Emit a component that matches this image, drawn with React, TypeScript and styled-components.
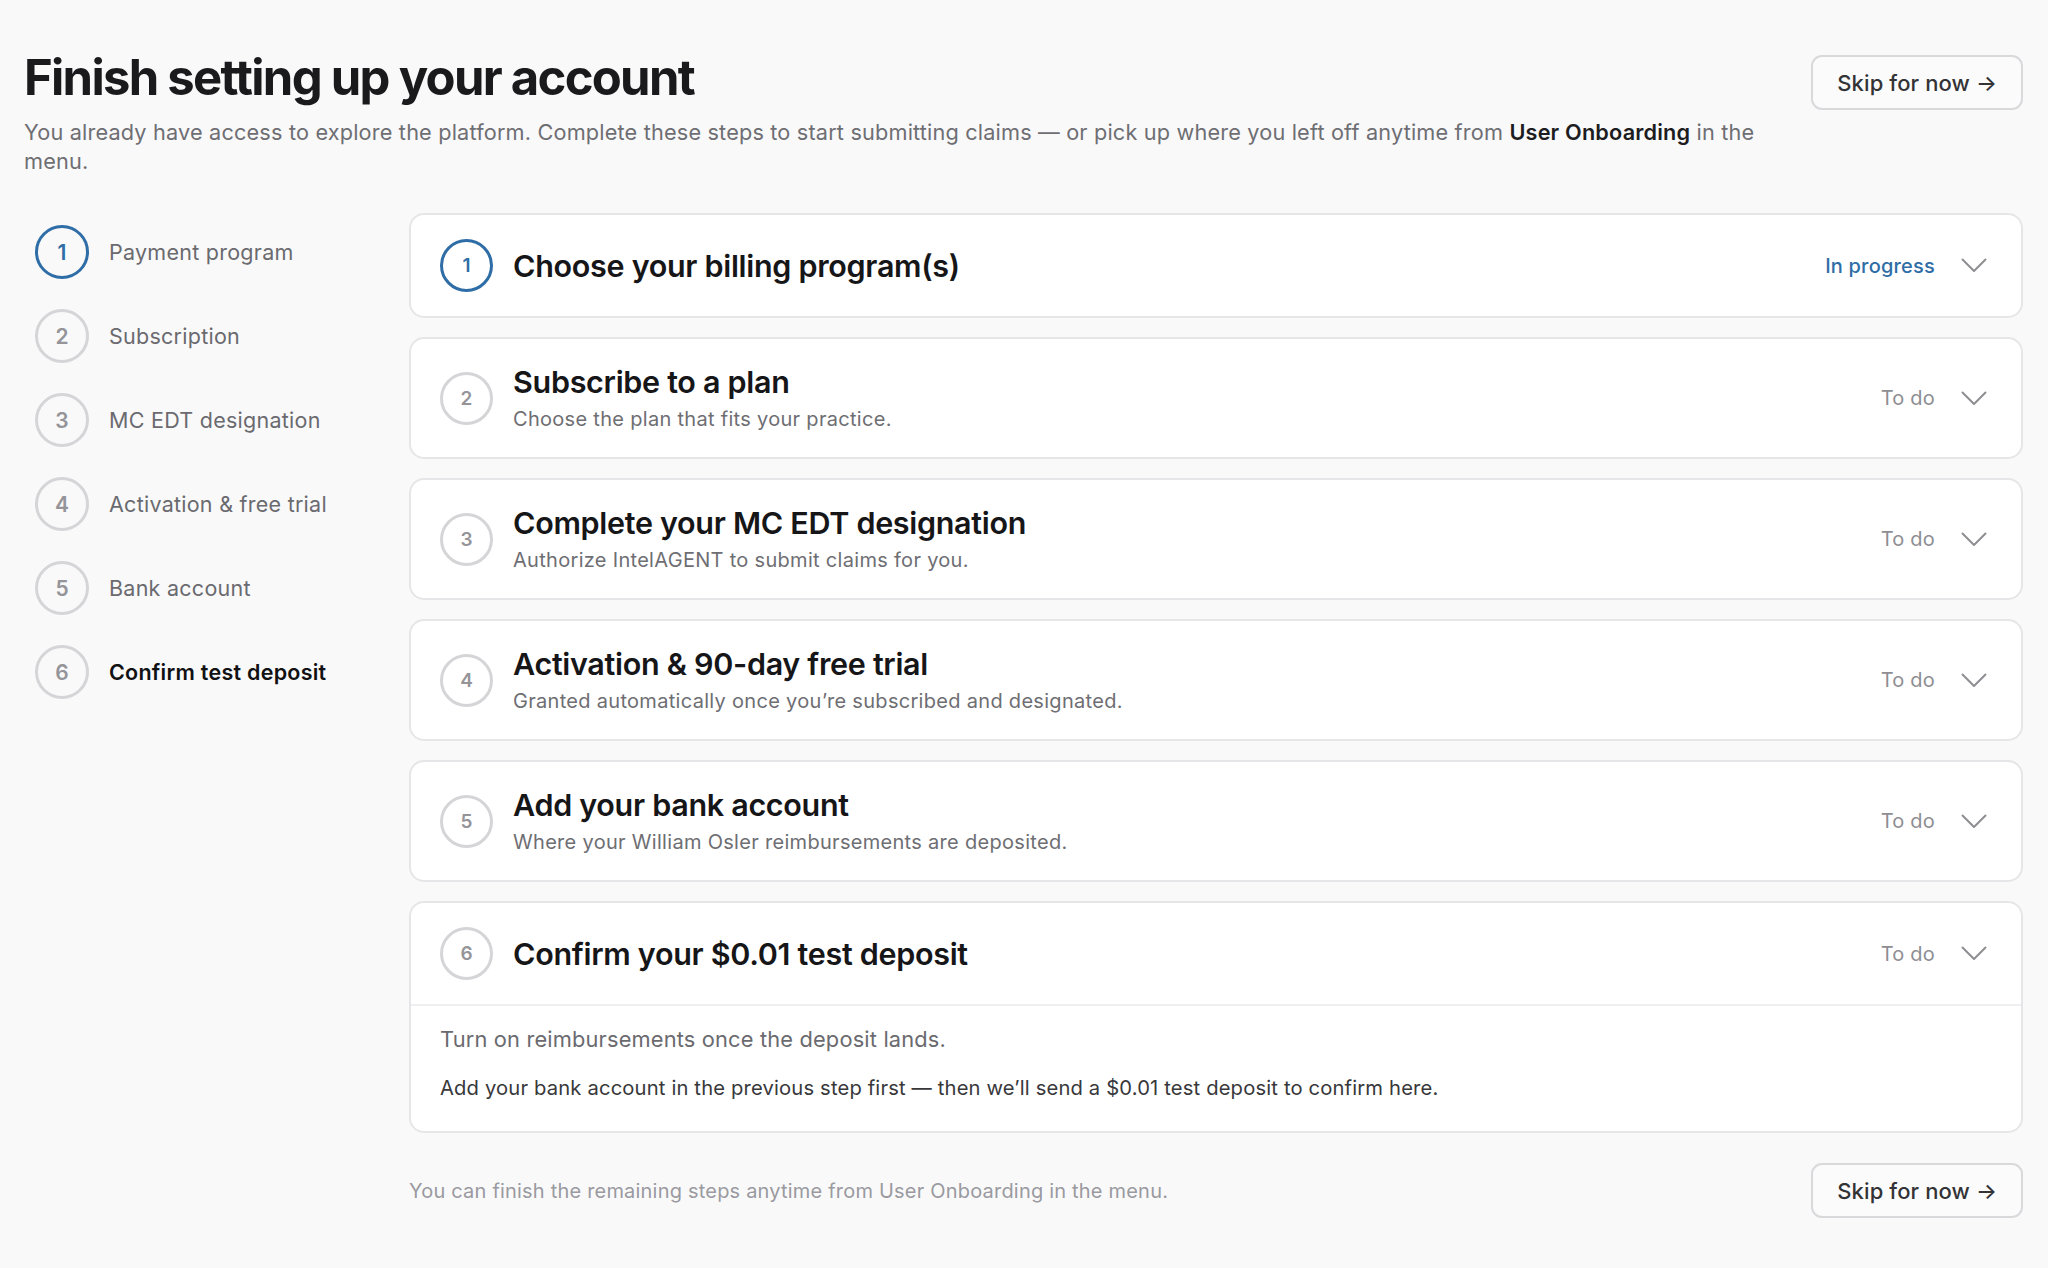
import React from "react";
import styled, { createGlobalStyle, css } from "styled-components";

const GlobalStyle = createGlobalStyle`
  html, body {
    margin: 0;
    padding: 0;
    background: #f9f9fa;
  }
  body {
    font-family: Inter, "Noto Sans", "Liberation Sans", sans-serif;
    color: #1d1d1f;
    -webkit-font-smoothing: antialiased;
  }
  * { box-sizing: border-box; }
`;

const Page = styled.div`
  padding: 48px 25px 40px 24px;
  min-height: 1268px;
`;

const Header = styled.header`
  display: flex;
  align-items: flex-start;
  gap: 32px;
`;

const HeaderText = styled.div`
  flex: 1;
  min-width: 0;
`;

const Title = styled.h1`
  margin: 0;
  font-size: 49px;
  line-height: 60px;
  font-weight: 700;
  letter-spacing: -0.035em;
  color: #1a1a1c;
`;

const Subtitle = styled.p`
  margin: 10px 0 0;
  font-size: 21.7px;
  line-height: 29px;
  color: #6e6e73;
  letter-spacing: 0.008em;
  strong {
    font-weight: 600;
    color: #1d1d1f;
  }
`;

const SkipButton = styled.button`
  flex-shrink: 0;
  margin-top: 7px;
  height: 55px;
  padding: 0 24px;
  border: 2px solid #d9d9dc;
  border-radius: 11px;
  background: #fbfbfc;
  font-family: inherit;
  font-size: 22px;
  font-weight: 500;
  color: #333336;
  letter-spacing: 0.005em;
  cursor: pointer;
`;

const Body = styled.div`
  display: grid;
  grid-template-columns: 385px 1fr;
  margin-top: 37px;
`;

const Sidebar = styled.nav`
  display: flex;
  flex-direction: column;
  gap: 30px;
  padding: 12px 0 0 11px;
`;

const SideItem = styled.div`
  display: flex;
  align-items: center;
  gap: 20px;
`;

const Circle = styled.div<{ $active?: boolean; $size: number; $fs: number }>`
  width: ${(p) => p.$size}px;
  height: ${(p) => p.$size}px;
  flex-shrink: 0;
  border-radius: 50%;
  display: flex;
  align-items: center;
  justify-content: center;
  font-size: ${(p) => p.$fs}px;
  font-weight: 600;
  ${(p) =>
    p.$active
      ? css`
          border: 3.5px solid #2e6da6;
          color: #2e6da6;
        `
      : css`
          border: 3px solid #d5d5d8;
          color: #949499;
        `}
`;

const SideLabel = styled.span<{ $bold?: boolean }>`
  font-size: 21.5px;
  letter-spacing: 0.012em;
  color: ${(p) => (p.$bold ? "#111113" : "#6a6a6f")};
  font-weight: ${(p) => (p.$bold ? 600 : 400)};
`;

const Main = styled.main`
  display: flex;
  flex-direction: column;
  gap: 19px;
`;

const Card = styled.section`
  background: #ffffff;
  border: 2px solid #e6e6e8;
  border-radius: 15px;
  overflow: hidden;
`;

const CardHead = styled.div`
  display: flex;
  align-items: center;
  gap: 20px;
  padding: 24px 34px 24px 29px;
`;

const CardText = styled.div`
  flex: 1;
  display: flex;
  flex-direction: column;
  gap: 5px;
`;

const CardTitle = styled.h2`
  margin: 0;
  font-size: 30.5px;
  line-height: 38px;
  font-weight: 600;
  letter-spacing: -0.01em;
  color: #161618;
`;

const CardDesc = styled.p`
  margin: 0;
  font-size: 20px;
  line-height: 27px;
  color: #6e6e73;
  letter-spacing: 0.015em;
`;

const Status = styled.span<{ $progress?: boolean }>`
  font-size: 20px;
  letter-spacing: 0.01em;
  font-weight: ${(p) => (p.$progress ? 500 : 400)};
  color: ${(p) => (p.$progress ? "#2e6da6" : "#8e8e93")};
  margin-right: 6px;
`;

const Chevron = styled.svg`
  flex-shrink: 0;
  display: block;
`;

const CardBody = styled.div`
  border-top: 2px solid #efeff1;
  padding: 18px 30px 29px 29px;
  display: flex;
  flex-direction: column;
  gap: 20px;
`;

const BodyLead = styled.p`
  margin: 0;
  font-size: 21.8px;
  line-height: 30px;
  color: #6a6a6f;
  letter-spacing: 0.008em;
`;

const BodyNote = styled.p`
  margin: 0;
  font-size: 20.2px;
  line-height: 28px;
  color: #38383b;
  letter-spacing: 0.008em;
`;

const Footer = styled.div`
  display: flex;
  align-items: center;
  justify-content: space-between;
  margin-top: 11px;
`;

const FooterNote = styled.p`
  margin: 0;
  font-size: 20px;
  color: #9a9aa0;
  letter-spacing: 0.01em;
`;

const FooterButton = styled(SkipButton)`
  margin-top: 0;
`;

const ChevronIcon = () => (
  <Chevron width="26" height="15" viewBox="0 0 26 15" fill="none">
    <polyline
      points="1.5,1.5 13,13 24.5,1.5"
      stroke="#8e8e93"
      strokeWidth="2"
      strokeLinecap="round"
      strokeLinejoin="round"
    />
  </Chevron>
);

type Step = {
  n: number;
  side: string;
  title: string;
  desc?: string;
  status: "progress" | "todo";
};

const steps: Step[] = [
  { n: 1, side: "Payment program", title: "Choose your billing program(s)", status: "progress" },
  { n: 2, side: "Subscription", title: "Subscribe to a plan", desc: "Choose the plan that fits your practice.", status: "todo" },
  { n: 3, side: "MC EDT designation", title: "Complete your MC EDT designation", desc: "Authorize IntelAGENT to submit claims for you.", status: "todo" },
  { n: 4, side: "Activation & free trial", title: "Activation & 90-day free trial", desc: "Granted automatically once you\u2019re subscribed and designated.", status: "todo" },
  { n: 5, side: "Bank account", title: "Add your bank account", desc: "Where your William Osler reimbursements are deposited.", status: "todo" },
  { n: 6, side: "Confirm test deposit", title: "Confirm your $0.01 test deposit", status: "todo" },
];

export default function App() {
  return (
    <>
      <GlobalStyle />
      <Page>
        <Header>
          <HeaderText>
            <Title>Finish setting up your account</Title>
            <Subtitle>
              You already have access to explore the platform. Complete these steps to start submitting claims — or pick up where you left off anytime from <strong>User Onboarding</strong> in the menu.
            </Subtitle>
          </HeaderText>
          <SkipButton>Skip for now →</SkipButton>
        </Header>

        <Body>
          <Sidebar>
            {steps.map((s) => (
              <SideItem key={s.n}>
                <Circle $size={54} $fs={21} $active={s.n === 1}>{s.n}</Circle>
                <SideLabel $bold={s.n === 6}>{s.side}</SideLabel>
              </SideItem>
            ))}
          </Sidebar>

          <Main>
            {steps.map((s) => (
              <Card key={s.n}>
                <CardHead>
                  <Circle $size={53} $fs={19} $active={s.n === 1}>{s.n}</Circle>
                  <CardText>
                    <CardTitle>{s.title}</CardTitle>
                    {s.desc && <CardDesc>{s.desc}</CardDesc>}
                  </CardText>
                  <Status $progress={s.status === "progress"}>
                    {s.status === "progress" ? "In progress" : "To do"}
                  </Status>
                  <ChevronIcon />
                </CardHead>
                {s.n === 6 && (
                  <CardBody>
                    <BodyLead>Turn on reimbursements once the deposit lands.</BodyLead>
                    <BodyNote>
                      Add your bank account in the previous step first — then we’ll send a $0.01 test deposit to confirm here.
                    </BodyNote>
                  </CardBody>
                )}
              </Card>
            ))}
            <Footer>
              <FooterNote>You can finish the remaining steps anytime from User Onboarding in the menu.</FooterNote>
              <FooterButton>Skip for now →</FooterButton>
            </Footer>
          </Main>
        </Body>
      </Page>
    </>
  );
}
